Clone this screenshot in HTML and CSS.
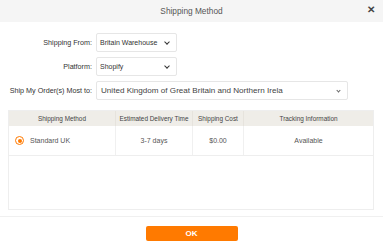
FILE: index.html
```html
<!DOCTYPE html>
<html lang="en">
<head>
   <title>Shipping Method</title>
   <link rel="stylesheet" href="styles.css">
</head>
<body>
   <div class="dialog">
      <!-- Header -->
      <div class="header">
         <span class="title">Shipping Method</span>
         <span class="close">&#10005;</span>
      </div>

      <!-- Options -->
      <div class="form">
         <div class="row">
            <label>Shipping From:</label>
            <div class="select small">Britain Warehouse<span class="caret"></span></div>
         </div>
         <div class="row">
            <label>Platform:</label>
            <div class="select small">Shopify<span class="caret"></span></div>
         </div>
         <div class="row">
            <label>Ship My Order(s) Most to:</label>
            <div class="select wide">United Kingdom of Great Britain and Northern Irela<span class="caret thin"></span></div>
         </div>
      </div>

      <!-- Methods table -->
      <div class="table">
         <div class="thead">
            <div class="c1">Shipping Method</div>
            <div class="c2">Estimated Delivery Time</div>
            <div class="c3">Shipping Cost</div>
            <div class="c4">Tracking Information</div>
         </div>
         <div class="trow">
            <div class="c1 left"><span class="radio"></span>Standard UK</div>
            <div class="c2">3-7 days</div>
            <div class="c3">$0.00</div>
            <div class="c4">Available</div>
         </div>
      </div>

      <div class="footer">
         <button class="ok">OK</button>
      </div>
   </div>
</body>
</html>
```

FILE: styles.css
```css
* {
   margin: 0;
   padding: 0;
   box-sizing: border-box;
   font-family: 'Liberation Sans', Arial, sans-serif;
}

body {
   background: #fff;
   width: 383px;
   height: 252px;
   overflow: hidden;
}

/* Header */
.header {
   height: 22px;
   background: #f5f5f5;
   display: flex;
   align-items: center;
   justify-content: center;
   position: relative;
}

.title {
   font-size: 8.3px;
   color: #555;
}

.close {
   position: absolute;
   right: 8px;
   top: 4px;
   font-size: 10px;
   font-weight: bold;
   color: #444;
}

/* Form rows */
.form {
   padding-top: 11px;
   display: flex;
   flex-direction: column;
   gap: 5px;
}

.row {
   display: flex;
   align-items: center;
   height: 19px;
}

.row label {
   width: 92px;
   text-align: right;
   font-size: 7.2px;
   color: #333;
   margin-right: 4px;
}

.select {
   height: 19px;
   border: 1px solid #e6e6e6;
   border-radius: 2px;
   display: flex;
   align-items: center;
   padding-left: 3px;
   position: relative;
   color: #333;
   background: #fff;
}

.select.small {
   width: 81px;
   font-size: 7px;
}

.select.wide {
   width: 252px;
   font-size: 8.1px;
   padding-left: 4px;
   color: #444;
}

.caret {
   position: absolute;
   right: 7px;
   top: 6px;
   width: 4px;
   height: 4px;
   border-right: 1.5px solid #333;
   border-bottom: 1.5px solid #333;
   transform: rotate(45deg);
}

.caret.thin {
   border-width: 1px;
   width: 3px;
   height: 3px;
   top: 7px;
   border-color: #666;
}

/* Table */
.table {
   margin: 10px 9px 0 8px;
   height: 100px;
   border: 1px solid #eeeeee;
}

.thead, .trow {
   display: flex;
}

.thead {
   height: 15px;
   background: #efede8;
   font-size: 6.4px;
   color: #444;
}

.trow {
   height: 30px;
   font-size: 7px;
   color: #555;
   border-bottom: 1px solid #eee;
}

.thead > div, .trow > div {
   display: flex;
   align-items: center;
   justify-content: center;
   border-right: 1px solid #e6e3dd;
}

.trow > div {
   border-right-color: #f0f0f0;
}

.c1 { width: 107px; }
.c2 { width: 77px; }
.c3 { width: 51px; }
.c4 { flex: 1; border-right: none !important; }

.trow .left {
   justify-content: flex-start;
   padding-left: 6px;
}

.radio {
   width: 9px;
   height: 9px;
   border-radius: 50%;
   border: 1px solid #ff7a00;
   margin-right: 6px;
   position: relative;
}

.radio::after {
   content: '';
   position: absolute;
   left: 1.5px;
   top: 1.5px;
   width: 4px;
   height: 4px;
   border-radius: 50%;
   background: #ff7a00;
}

/* Footer */
.footer {
   margin-top: 6px;
   border-top: 1px solid #f0f0f0;
   display: flex;
   justify-content: center;
   padding-top: 9px;
}

.ok {
   width: 92px;
   height: 15px;
   background: #ff7a00;
   color: #fff;
   border: 0;
   border-radius: 2px;
   font-size: 8px;
   font-weight: bold;
}
```
